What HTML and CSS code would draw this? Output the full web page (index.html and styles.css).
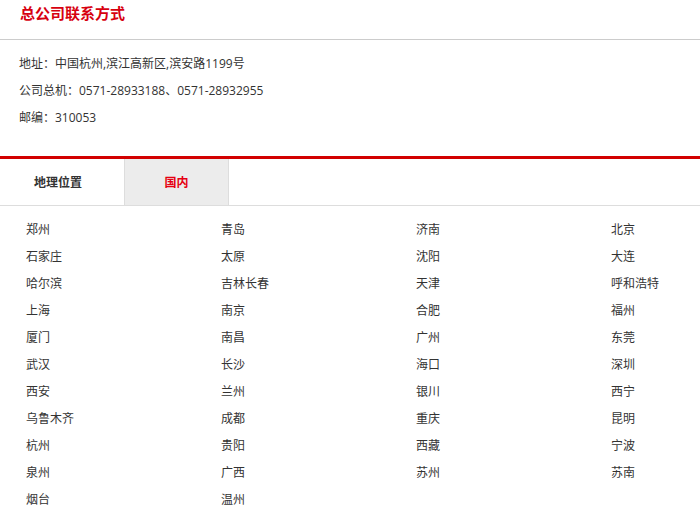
FILE: index.html
```html
<!DOCTYPE html>
<html lang="zh">
<head>
<meta charset="utf-8">
<title>总公司联系方式</title>
<link rel="stylesheet" href="styles.css">
</head>
<body>
<div class="page">
  <h2 class="title">总公司联系方式</h2>
  <div class="info">
    <p>地址：中国杭州,滨江高新区,滨安路1199号</p>
    <p>公司总机：0571-28933188、0571-28932955</p>
    <p>邮编：310053</p>
  </div>
  <div class="tabs">
    <div class="tab tab-geo">地理位置</div>
    <div class="tab tab-active">国内</div>
  </div>
  <ul class="cities">
    <li>郑州</li><li>青岛</li><li>济南</li><li>北京</li>
    <li>石家庄</li><li>太原</li><li>沈阳</li><li>大连</li>
    <li>哈尔滨</li><li>吉林长春</li><li>天津</li><li>呼和浩特</li>
    <li>上海</li><li>南京</li><li>合肥</li><li>福州</li>
    <li>厦门</li><li>南昌</li><li>广州</li><li>东莞</li>
    <li>武汉</li><li>长沙</li><li>海口</li><li>深圳</li>
    <li>西安</li><li>兰州</li><li>银川</li><li>西宁</li>
    <li>乌鲁木齐</li><li>成都</li><li>重庆</li><li>昆明</li>
    <li>杭州</li><li>贵阳</li><li>西藏</li><li>宁波</li>
    <li>泉州</li><li>广西</li><li>苏州</li><li>苏南</li>
    <li>烟台</li><li>温州</li>
  </ul>
</div>
</body>
</html>
```

FILE: styles.css
```css
html, body {
  margin: 0;
  padding: 0;
  background: #fff;
}
body {
  font-family: "Open Sans", "Noto Sans CJK SC", sans-serif;
  color: #333;
  font-size: 12px;
  overflow: hidden;
}
.page {
  width: 700px;
  overflow: hidden;
}
.title {
  margin: 0;
  padding: 0 20px;
  height: 39px;
  line-height: 27px;
  font-size: 15px;
  font-weight: bold;
  color: #d7000f;
  border-bottom: 1px solid #ccc;
}
.info {
  padding: 10px 19px 25px;
  border-bottom: 3px solid #d20000;
}
.info p {
  margin: 0;
  line-height: 27px;
  font-size: 12px;
}
.tabs {
  display: flex;
  height: 46px;
  border-bottom: 1px solid #ddd;
}
.tab {
  display: flex;
  align-items: center;
  justify-content: center;
  font-size: 12px;
  font-weight: bold;
}
.tab-geo {
  width: 116px;
  padding-right: 8px;
  color: #333;
}
.tab-active {
  width: 103px;
  background: #ececec;
  border-left: 1px solid #ddd;
  border-right: 1px solid #ddd;
  color: #e60012;
}
.cities {
  list-style: none;
  margin: 0;
  padding: 10px 0 0 26px;
  display: grid;
  grid-template-columns: repeat(3, 195px) 1fr;
}
.cities li {
  line-height: 27px;
  height: 27px;
  white-space: nowrap;
}
```
